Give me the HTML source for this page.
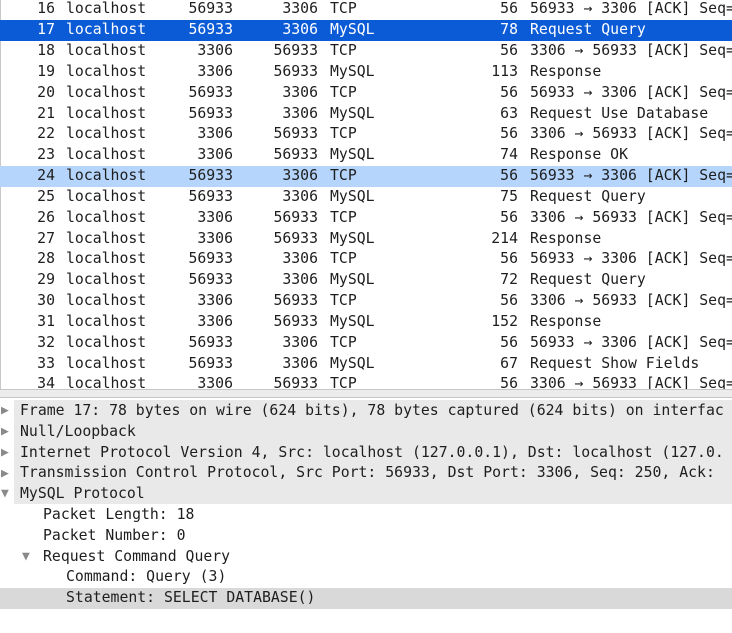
<!DOCTYPE html>
<html><head><meta charset="utf-8"><style>
*{margin:0;padding:0;box-sizing:border-box}
body{width:732px;height:633px;overflow:hidden;background:#fff;font-family:"DejaVu Sans Mono","Liberation Mono",monospace;font-size:14.8px;color:#1e1e1e;position:relative}
.r{position:absolute;left:0;width:732px;height:20.83px;line-height:20.83px;white-space:pre}
.r span{position:absolute;top:0}
.n{right:677px;text-align:right}
.h{left:66px}
.s{right:499px}
.d{right:414px}
.p{left:330px}
.l{right:214px}
.i{left:530px}
.sel{background:#0b5bd6;color:#fff}
.sel2{background:#b5d5fc}
.t{position:absolute;white-space:pre;height:20.83px;line-height:20.83px}
.arr{position:absolute;font-size:13px;color:#8a8a8a;line-height:14px}
</style></head><body>
<div style="position:absolute;left:0;top:0;width:1px;height:389px;background:#c8c8c8"></div>
<div id="list"></div>
<div style="position:absolute;left:0;top:389px;width:732px;height:9px;background:#ececec;border-top:1px solid #c6c6c6;border-bottom:1px solid #c6c6c6"></div>
<div style="position:absolute;left:14px;top:400px;width:718px;height:104px;background:#e9e9e9"></div>
<div style="position:absolute;left:0;top:588px;width:732px;height:20.8px;background:#d9d9d9"></div>
<div class="t" style="left:20px;top:401px">Frame 17: 78 bytes on wire (624 bits), 78 bytes captured (624 bits) on interfac</div>
<div class="t" style="left:20px;top:421.8px">Null/Loopback</div>
<div class="t" style="left:20px;top:442.6px">Internet Protocol Version 4, Src: localhost (127.0.0.1), Dst: localhost (127.0.</div>
<div class="t" style="left:20px;top:463.4px">Transmission Control Protocol, Src Port: 56933, Dst Port: 3306, Seq: 250, Ack: </div>
<div class="t" style="left:20px;top:484.2px">MySQL Protocol</div>
<div class="t" style="left:43px;top:505px">Packet Length: 18</div>
<div class="t" style="left:43px;top:525.8px">Packet Number: 0</div>
<div class="t" style="left:43px;top:546.6px">Request Command Query</div>
<div class="t" style="left:66px;top:567.4px">Command: Query (3)</div>
<div class="t" style="left:66px;top:588.2px">Statement: SELECT DATABASE()</div>
<div class="arr" style="left:1px;top:404px">▶</div>
<div class="arr" style="left:1px;top:425px">▶</div>
<div class="arr" style="left:1px;top:446px">▶</div>
<div class="arr" style="left:1px;top:467px">▶</div>
<div class="arr" style="left:1px;top:487px">▼</div>
<div class="arr" style="left:22px;top:550px">▼</div>
<script>
var rows=[
[16,56933,3306,"TCP",56,"56933 → 3306 [ACK] Seq="],
[17,56933,3306,"MySQL",78,"Request Query"],
[18,3306,56933,"TCP",56,"3306 → 56933 [ACK] Seq="],
[19,3306,56933,"MySQL",113,"Response"],
[20,56933,3306,"TCP",56,"56933 → 3306 [ACK] Seq="],
[21,56933,3306,"MySQL",63,"Request Use Database"],
[22,3306,56933,"TCP",56,"3306 → 56933 [ACK] Seq="],
[23,3306,56933,"MySQL",74,"Response OK"],
[24,56933,3306,"TCP",56,"56933 → 3306 [ACK] Seq="],
[25,56933,3306,"MySQL",75,"Request Query"],
[26,3306,56933,"TCP",56,"3306 → 56933 [ACK] Seq="],
[27,3306,56933,"MySQL",214,"Response"],
[28,56933,3306,"TCP",56,"56933 → 3306 [ACK] Seq="],
[29,56933,3306,"MySQL",72,"Request Query"],
[30,3306,56933,"TCP",56,"3306 → 56933 [ACK] Seq="],
[31,3306,56933,"MySQL",152,"Response"],
[32,56933,3306,"TCP",56,"56933 → 3306 [ACK] Seq="],
[33,56933,3306,"MySQL",67,"Request Show Fields"],
[34,3306,56933,"TCP",56,"3306 → 56933 [ACK] Seq="]];
var h="";
rows.forEach(function(r,k){
var c=r[0]==17?" sel":r[0]==24?" sel2":"";
var top=-0.6+k*20.83;
h+='<div class="r'+c+'" style="top:'+top+'px"><span class="n">'+r[0]+'</span><span class="h">localhost</span><span class="s">'+r[1]+'</span><span class="d">'+r[2]+'</span><span class="p">'+r[3]+'</span><span class="l">'+r[4]+'</span><span class="i">'+r[5]+'</span></div>';
});
document.getElementById("list").innerHTML=h;
</script>
<div style="position:absolute;left:0;top:389px;width:732px;height:9px;background:#ececec;border-top:1px solid #c6c6c6;border-bottom:1px solid #c6c6c6"></div>
</body></html>
